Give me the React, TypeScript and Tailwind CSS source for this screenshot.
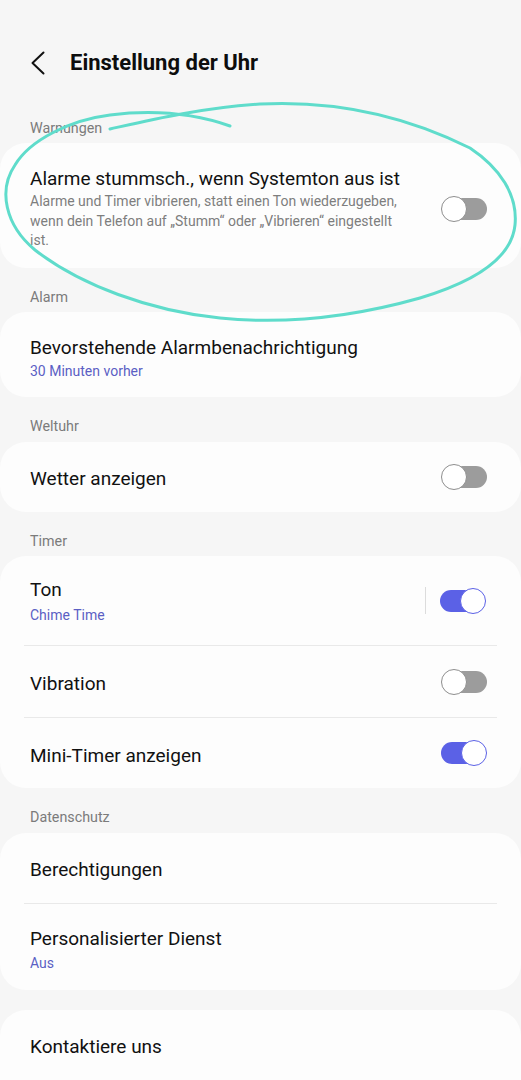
import React from "react";

const FONT = { fontFamily: "Roboto, 'Noto Sans', 'Liberation Sans', sans-serif" };

function Toggle({ on }: { on?: boolean }) {
  if (on) {
    return (
      <div className="relative h-[26px] w-[46px] shrink-0">
        <div className="absolute left-0 top-[2px] h-[22px] w-[36px] rounded-full bg-[#5b61e6]" />
        <div className="absolute right-0 top-0 h-[26px] w-[26px] rounded-full border-[1.5px] border-[#5b61e6] bg-white" />
      </div>
    );
  }
  return (
    <div className="relative h-[26px] w-[46px] shrink-0">
      <div className="absolute right-0 top-[2px] h-[22px] w-[36px] rounded-full bg-[#9c9c9c]" />
      <div className="absolute left-0 top-0 h-[26px] w-[26px] rounded-full border-[1.5px] border-[#8e8e8e] bg-white" />
    </div>
  );
}

function Label({ children }: { children: React.ReactNode }) {
  return (
    <div className="px-[30px] pt-[20px] pb-[6.5px] text-[14.3px] leading-[18px] text-[#7b7b7b]">
      {children}
    </div>
  );
}

function Card({ children }: { children: React.ReactNode }) {
  return <div className="rounded-[26px] bg-[#fdfdfd]">{children}</div>;
}

function Divider() {
  return <div className="mx-[24px] h-px bg-[#e9e9e9]" />;
}

function SimpleRow({ title, toggle, h = 70 }: { title: string; toggle?: "on" | "off"; h?: number }) {
  return (
    <div
      className={`flex items-center justify-between pl-[30px] pr-[34px] ${h === 71 ? "h-[71px]" : "h-[70px]"}`}
    >
      <div className="pt-[5px] text-[19px] leading-[22px] text-[#111]">{title}</div>
      {toggle && <Toggle on={toggle === "on"} />}
    </div>
  );
}

export default function App() {
  return (
    <div className="relative min-h-[1080px] w-[521px] overflow-hidden bg-[#f6f6f6]" style={FONT}>
      {/* Header */}
      <div className="flex h-[77.5px] items-end pl-[30px]">
        <div className="flex h-[30px] items-center">
          <svg width="16" height="24" viewBox="0 0 16 24" className="mr-[24px]">
            <polyline
              points="13.5,1.5 2.5,12 13.5,22.5"
              fill="none"
              stroke="#111"
              strokeWidth="2"
              strokeLinecap="round"
              strokeLinejoin="round"
            />
          </svg>
          <div className="text-[22px] font-bold leading-[30px] text-[#0d0d0d]">Einstellung der Uhr</div>
        </div>
      </div>

      <div className="pt-[41px]">
        <div className="px-[30px] pb-[6.5px] text-[14.3px] leading-[18px] text-[#7b7b7b]">Warnungen</div>
      </div>

      {/* Card 1 */}
      <Card>
        <div className="flex items-center justify-between pl-[30px] pr-[34px] pt-[25px] pb-[17px]">
          <div className="w-[376px]">
            <div className="text-[19px] leading-[22px] text-[#111]">Alarme stummsch., wenn Systemton aus ist</div>
            <div className="mt-[2px] text-[14px] leading-[19.5px] text-[#7e7e7e]">
              Alarme und Timer vibrieren, statt einen Ton wiederzugeben, wenn dein Telefon auf {"\u201EStumm\u201C"} oder{" "}
              {"\u201EVibrieren\u201C"} eingestellt ist.
            </div>
          </div>
          <Toggle />
        </div>
      </Card>

      <Label>Alarm</Label>
      <Card>
        <div className="pl-[30px] pt-[24.5px] pb-[17px]">
          <div className="text-[19px] leading-[22px] text-[#111]">Bevorstehende Alarmbenachrichtigung</div>
          <div className="mt-[3.5px] text-[14px] leading-[18px] text-[#5b5fc4]">30 Minuten vorher</div>
        </div>
      </Card>

      <Label>Weltuhr</Label>
      <Card>
        <SimpleRow title="Wetter anzeigen" toggle="off" />
      </Card>

      <Label>Timer</Label>
      <Card>
        <div className="flex h-[89px] items-center justify-between pl-[30px] pr-[35px]">
          <div className="pt-[1px]">
            <div className="text-[19px] leading-[22px] text-[#111]">Ton</div>
            <div className="mt-[5px] text-[14px] leading-[18px] text-[#5b5fc4]">Chime Time</div>
          </div>
          <div className="flex items-center gap-[14px]">
            <div className="h-[27px] w-px bg-[#dcdcdc]" />
            <Toggle on />
          </div>
        </div>
        <Divider />
        <SimpleRow title="Vibration" toggle="off" h={71} />
        <Divider />
        <SimpleRow title="Mini-Timer anzeigen" toggle="on" />
      </Card>

      <Label>Datenschutz</Label>
      <Card>
        <SimpleRow title="Berechtigungen" />
        <Divider />
        <div className="pl-[30px] pt-[24px] pb-[17.5px]">
          <div className="text-[19px] leading-[22px] text-[#111]">Personalisierter Dienst</div>
          <div className="mt-[4.5px] text-[14px] leading-[18px] text-[#5b5fc4]">Aus</div>
        </div>
      </Card>

      <div className="h-[20px]" />
      <Card>
        <div className="flex h-[70px] items-center pl-[30px]">
          <div className="pt-[5px] text-[19px] leading-[22px] text-[#111]">Kontaktiere uns</div>
        </div>
        <div className="h-[30px]" />
      </Card>

      {/* Hand-drawn annotation */}
      <svg
        className="pointer-events-none absolute left-0 top-0"
        width="521"
        height="340"
        viewBox="0 0 521 340"
      >
        <path
          d="M 110 129 C 150 120, 200 108, 260 104 C 340 100, 410 118, 470 148 C 500 168, 518 195, 515 225 C 512 255, 480 280, 420 298 C 360 315, 290 325, 220 318 C 150 311, 80 285, 35 250 C 5 225, -2 190, 15 165 C 30 140, 70 120, 110 115 C 150 110, 190 112, 230 126"
          fill="none"
          stroke="#5fdccb"
          strokeWidth="3"
          strokeLinecap="round"
          strokeLinejoin="round"
        />
      </svg>
    </div>
  );
}
